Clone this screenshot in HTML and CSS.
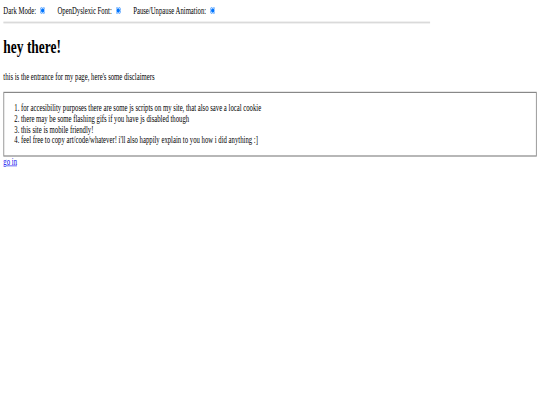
FILE: index.html
```html
<!DOCTYPE html>
<html lang="en">
<head>
  <meta charset="UTF-8" />
  <meta name="viewport" content="width=device-width, initial-scale=1.0" />
  <title>hey there!</title>
  <link rel="stylesheet" href="styles.css">
</head>
<body>
  <div class="frame">
    <div class="page">
      <div class="toggles">
        <label for="dark">Dark Mode:</label>
        <input type="radio" id="dark" checked>
        <label for="dyslexic">OpenDyslexic Font:</label>
        <input type="radio" id="dyslexic" checked>
        <label for="anim">Pause/Unpause Animation:</label>
        <input type="radio" id="anim" checked>
      </div>
      <hr>

      <h1>hey there!</h1>
      <p>this is the entrance for my page, here's some disclaimers</p>

      <div class="box">
        <ol>
          <li>for accesibility purposes there are some js scripts on my site, that also save a local cookie</li>
          <li>there may be some flashing gifs if you have js disabled though</li>
          <li>this site is mobile friendly!</li>
          <li>feel free to copy art/code/whatever! i'll also happily explain to you how i did anything :]</li>
        </ol>
      </div>
      <a href="#">go in</a>
    </div>
  </div>
</body>
</html>
```

FILE: styles.css
```css
html, body {
  margin: 0;
  overflow: hidden;
}
body {
  font-family: "Liberation Serif", "Times New Roman", serif;
  background: #fff;
  color: #000;
}
.frame {
  width: 540px;
  height: 405px;
  overflow: hidden;
}
/* the page was laid out on a wide window, then squeezed into this one */
.page {
  width: 1286px;
  height: 675px;
  box-sizing: border-box;
  padding: 8px;
  transform: scale(0.42, 0.6);
  transform-origin: 0 0;
}
.toggles input {
  margin-right: 25px;
}
hr {
  width: 80%;
  margin-left: 0;
  border: none;
  height: 3px;
  background: #dadada;
}
.box {
  border: 2px solid #888;
}
a {
  color: #0000ee;
}
```
